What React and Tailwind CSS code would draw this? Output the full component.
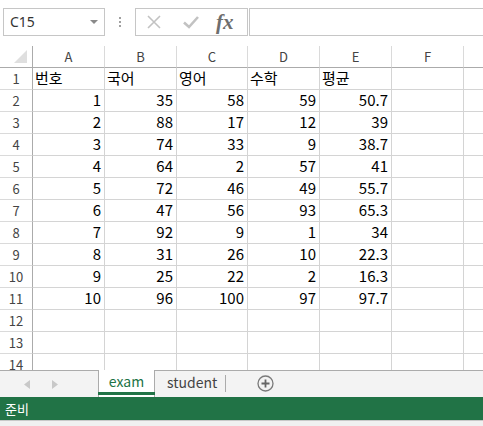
import React from 'react';

// Column widths so the grid lines land where the sheet draws them
const cols = [
  { key: 'A', w: 'w-[72px]' },
  { key: 'B', w: 'w-[72px]' },
  { key: 'C', w: 'w-[71px]' },
  { key: 'D', w: 'w-[72px]' },
  { key: 'E', w: 'w-[72px]' },
  { key: 'F', w: 'w-[72px]' },
];

const header = ['번호', '국어', '영어', '수학', '평균'];

const data = [
  [1, 35, 58, 59, 50.7],
  [2, 88, 17, 12, 39],
  [3, 74, 33, 9, 38.7],
  [4, 64, 2, 57, 41],
  [5, 72, 46, 49, 55.7],
  [6, 47, 56, 93, 65.3],
  [7, 92, 9, 1, 34],
  [8, 31, 26, 10, 22.3],
  [9, 25, 22, 2, 16.3],
  [10, 96, 100, 97, 97.7],
];

const font = "font-['Noto_Sans_CJK_KR','Noto_Sans',sans-serif]";

function FormulaBar() {
  return (
    <div className="h-[36px] flex items-start pt-[8px] bg-white shrink-0">
      <div className="ml-[3px] w-[102px] h-[28px] border border-[#c6c6c6] flex items-center justify-between pl-[6px] pr-[6px]">
        <span className="text-[14px] text-[#333] leading-none">C15</span>
        <svg width="8" height="5" viewBox="0 0 8 5"><path d="M0 0h8L4 4z" fill="#8a8a8a" /></svg>
      </div>
      <div className="w-[30px] h-[28px] flex flex-col items-center justify-center gap-[2px]">
        <span className="w-[2px] h-[2px] bg-[#a0a0a0]" />
        <span className="w-[2px] h-[2px] bg-[#a0a0a0]" />
        <span className="w-[2px] h-[2px] bg-[#a0a0a0]" />
      </div>
      <div className="w-[113px] h-[28px] border border-[#c6c6c6] flex items-center pl-[10px]">
        <svg width="16" height="16" viewBox="0 0 16 16">
          <path d="M2 2L14 14M14 2L2 14" stroke="#c2c2c2" strokeWidth="1.6" />
        </svg>
        <svg className="ml-[20px]" width="18" height="14" viewBox="0 0 18 14">
          <path d="M2 7.5L7 12L16 2" stroke="#c2c2c2" strokeWidth="2.6" fill="none" />
        </svg>
        <span className="ml-[16px] font-['Liberation_Serif',serif] italic font-bold text-[21px] text-[#6e6e6e] leading-none">fx</span>
      </div>
      <div className="ml-px flex-1 h-[28px] border border-[#c6c6c6] border-r-0" />
    </div>
  );
}

function Corner() {
  return (
    <div className="w-[33px] h-[22px] border-r border-b border-[#ababab] flex items-end justify-end pr-[5px] pb-[4px]">
      <svg width="13" height="13" viewBox="0 0 13 13"><path d="M13 0V13H0z" fill="#dfdfdf" /></svg>
    </div>
  );
}

function Sheet() {
  const rows = [];
  for (let r = 1; r <= 14; r++) {
    let cells;
    if (r === 1) cells = header.map((h) => ({ v: h, left: true }));
    else if (r <= 11) cells = data[r - 2].map((n) => ({ v: n, left: false }));
    else cells = [];
    rows.push({ r, cells });
  }

  return (
    <div className={`flex-1 overflow-hidden bg-white pt-[10px] ${font}`}>
      <div className="flex">
        <Corner />
        {cols.map((c) => (
          <div key={c.key} className={`${c.w} h-[22px] border-r border-b border-r-[#dadada] border-b-[#ababab] flex items-center justify-center text-[13px] text-[#444]`}>
            {c.key}
          </div>
        ))}
        <div className="flex-1 h-[22px] border-b border-[#ababab]" />
      </div>
      {rows.map(({ r, cells }) => (
        <div key={r} className="flex">
          <div className="w-[33px] h-[22px] border-r border-b border-r-[#ababab] border-b-[#dadada] flex items-center justify-center text-[13px] text-[#444]">
            {r}
          </div>
          {cols.map((c, i) => {
            const cell = cells[i];
            return (
              <div
                key={c.key}
                className={`${c.w} h-[22px] border-r border-b border-[#d4d4d4] flex items-end pb-[1px] text-[15px] leading-[20px] text-black ${cell && cell.left ? 'justify-start pl-[2px]' : 'justify-end pr-[3px]'}`}
              >
                {cell ? cell.v : ''}
              </div>
            );
          })}
          <div className="flex-1 h-[22px] border-b border-[#d4d4d4]" />
        </div>
      ))}
    </div>
  );
}

function TabBar() {
  return (
    <div className={`h-[27px] shrink-0 bg-[#f3f3f3] border-t border-[#ababab] flex items-stretch ${font}`}>
      <div className="w-[98px] flex items-center pl-[24px] gap-[22px]">
        <svg width="6" height="9" viewBox="0 0 6 9"><path d="M6 0V9L0 4.5z" fill="#c8c8c8" /></svg>
        <svg width="6" height="9" viewBox="0 0 6 9"><path d="M0 0V9L6 4.5z" fill="#c8c8c8" /></svg>
      </div>
      <div className="w-[57px] -mt-px bg-white border-l border-r border-[#ababab] flex flex-col">
        <div className="flex-1 flex items-center justify-center text-[14px] text-[#217346]">exam</div>
        <div className="h-[3px] bg-[#217346] mb-[2px] -mx-px" />
      </div>
      <div className="w-[70px] pl-[12px] flex items-center text-[14px] text-[#444] pb-[3px]">student</div>
      <div className="w-px bg-[#ababab] my-[4px] mb-[5px]" />
      <div className="pl-[31px] flex items-center pb-[2px]">
        <svg width="17" height="17" viewBox="0 0 17 17">
          <circle cx="8.5" cy="8.5" r="7.5" fill="none" stroke="#7a7a7a" strokeWidth="1.3" />
          <path d="M8.5 4.5v8M4.5 8.5h8" stroke="#666" strokeWidth="1.8" />
        </svg>
      </div>
    </div>
  );
}

export default function App() {
  return (
    <div className="w-[483px] h-[426px] flex flex-col overflow-hidden bg-white font-['Noto_Sans',sans-serif]">
      <FormulaBar />
      <Sheet />
      <TabBar />
      <div className={`h-[23px] shrink-0 bg-[#217346] flex items-center pl-[5px] text-white text-[13px] ${font}`}>준비</div>
      <div className="h-[6px] shrink-0 bg-[#f0f0f0] border-t border-[#c8c8c8]" />
    </div>
  );
}
